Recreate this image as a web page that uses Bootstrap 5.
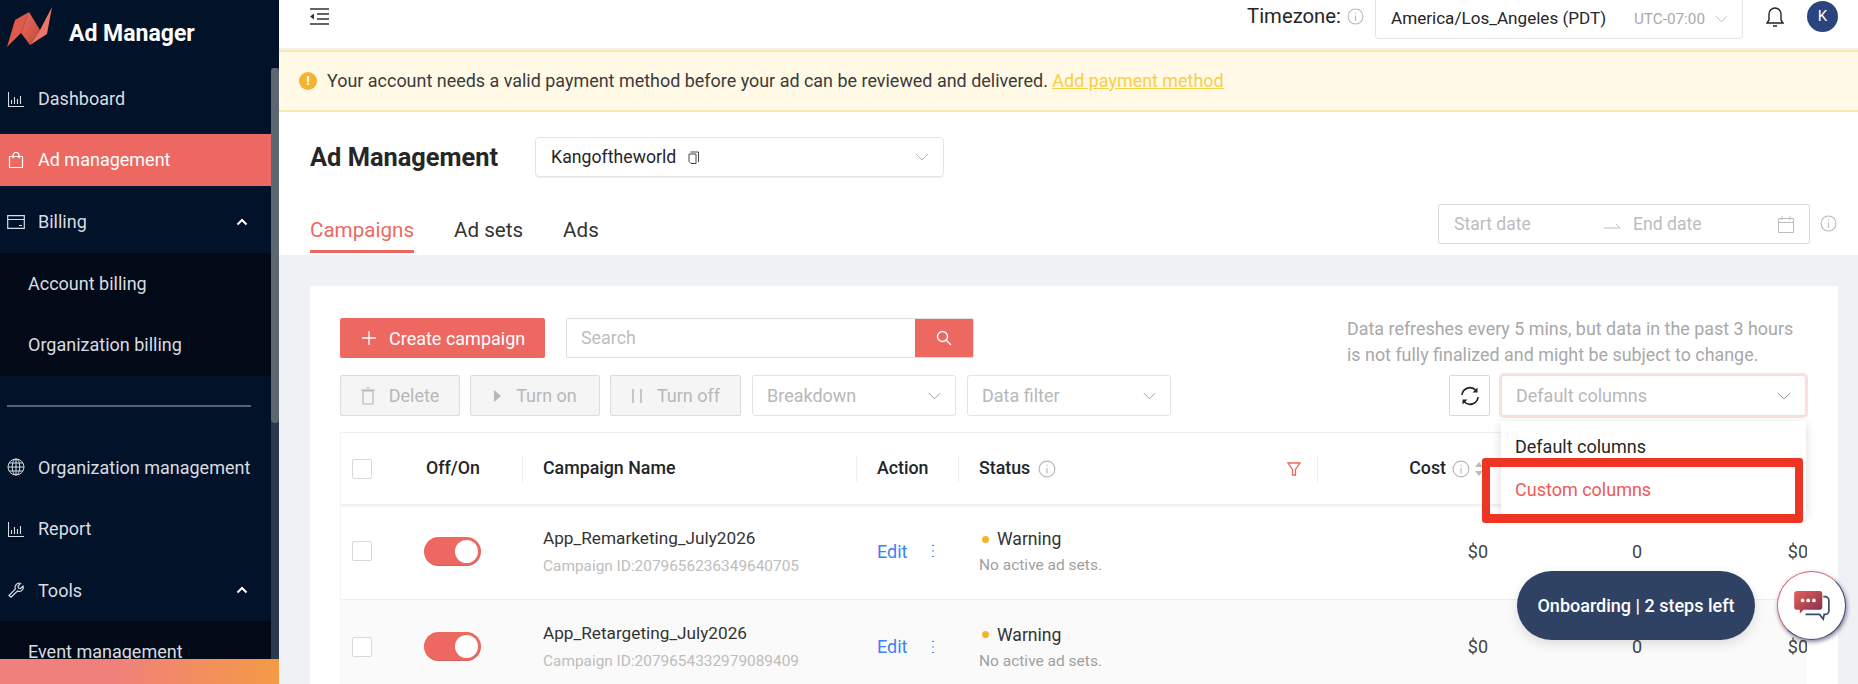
<!DOCTYPE html>
<html lang="en">
<head>
<meta charset="UTF-8">
<meta name="viewport" content="width=device-width, initial-scale=1.0">
<title>Ad Manager</title>
<link href="https://cdn.jsdelivr.net/npm/bootstrap@5.3.0/dist/css/bootstrap.min.css" rel="stylesheet">
<style>
html, body { height: 684px; overflow: hidden; }
body { font-family: Roboto, "Liberation Sans", sans-serif; color: #262626; font-size: 18px; background: #f0f1f5; }
svg { display: block; flex: none; }
.app-wrap { width: 1858px; height: 684px; position: relative; overflow: hidden; }

/* sidebar */
.side { width: 279px; height: 684px; flex: none; background: #021229; color: #d9dce1; position: relative; overflow: hidden; }
.side-logo { height: 68px; padding-left: 7px; color: #fff; font-size: 23px; font-weight: 700; gap: 17px; }
.side-logo svg { align-self: flex-start; margin-top: 7px; }
.side-link { height: 61.5px; padding: 0 23px 0 8px; gap: 14px; font-size: 18px; white-space: nowrap; margin-right: 8px; }
.side-link.on { background: #ee6862; color: #fff; height: 52px; margin: 4px 8px 5.5px 0; }
.side-link svg { width: 16px; height: 16px; }
.side-link svg.wide-ic { width: 18px; margin: 0 -1px 0 -1px; }
.side-link svg.globe-ic { width: 18px; height: 18px; margin: 0 -1px 0 -1px; }
.side-link .side-chev { width: 12px; height: 8px; margin-left: auto; }
.side-sub { background: #020a17; margin-right: 8px; }
.side-sub div { height: 61.5px; padding-left: 28px; display: flex; align-items: center; font-size: 18px; }
.side-rule { height: 2px; background: #58636f; margin: 29px 28px 30px 7px; }
.side-thumb { position: absolute; right: 0; top: 68px; bottom: 0; width: 8px; background: #2a3a4c; }
.side-thumb i { display: block; height: 355px; background: #5c6772; border-radius: 4px; }
.side-foot { position: absolute; left: 0; right: 0; bottom: 0; height: 25px; background: linear-gradient(90deg, #f0807c 40%, #f49a45 100%); }

/* top */
.main-col { flex: 1; min-width: 0; }
.top-strip { height: 48px; background: #fff; padding: 0 20px 0 31px; }
.tz-label { font-size: 20.3px; margin-right: 6px; }
.tz-box { width: 368px; height: 39px; margin: 0 23px 0 11px; padding: 0 14px 0 15px; border: 1px solid #e4e4e4; border-top: 0; border-radius: 0 0 4px 4px; font-size: 17.1px; align-self: flex-start; white-space: nowrap; }
.tz-box small { font-size: 15.3px; color: #aaa; margin-left: auto; margin-right: 10px; }
.who-badge { width: 31px; height: 31px; border-radius: 50%; background: #2a4480; color: #fff; font-size: 15px; margin-left: 23px; align-self: flex-start; margin-top: 1px; }
.pay-warn { height: 62px; margin-top: 2px; background: #fff9e6; border-top: 2px solid #fbe8ae; border-bottom: 2px solid #fbe8ae; padding-left: 20px; gap: 10px; font-size: 17.95px; color: #3b3b3b; white-space: nowrap; }
.pay-warn a { color: #f8ce47; }
.pay-dot { width: 18px; height: 18px; border-radius: 50%; background: #f5b32f; color: #fff; font-size: 13px; font-weight: 700; line-height: 18px; text-align: center; }
.head-zone { height: 143px; background: #fff; padding: 25px 21px 0 31px; }
.page-name { font-size: 25.4px; font-weight: 700; margin: 0 37px 0 0; }
.acct-box { width: 409px; height: 40px; border: 1px solid #e4e4e4; border-radius: 4px; padding: 0 14px 0 15px; font-size: 17.7px; box-shadow: 0 1px 1px #eee; }
.copy-ic { margin-left: 11px; }
.tab-row { margin-top: 23px; gap: 40px; }
.tab-row a { display: block; height: 53px; padding-top: 15px; font-size: 20.6px; color: #333; text-decoration: none; }
.tab-row a.on { color: #ee6862; border-bottom: 3px solid #ee6862; }
.date-box { width: 372px; height: 40px; border: 1px solid #d9d9d9; border-radius: 3px; padding: 0 15px; font-size: 17.6px; color: #bdbdbd; margin-top: 27px; }
.date-start { width: 150px; }
.date-arrow { margin-right: 13px; }
.date-info { margin: 38px 0 0 10px; }

/* card */
.page-body { padding: 31px 0 0 31px; height: 429px; background: #f0f1f5; }
.sheet { width: 1528px; height: 398px; background: #fff; padding: 32px 0 0 30px; }
.btn-coral { background: #ee6862; color: #fff; border: 0; border-radius: 2px; height: 40px; font-size: 18px; width: 205px; white-space: nowrap; padding-left: 17px; }
.search-box { width: 408px; height: 40px; border: 1px solid #e0e0e0; border-radius: 2px; overflow: hidden; margin-left: 21px; color: #bdbdbd; font-size: 17.9px; }
.search-box span { flex: 1; padding-left: 14px; }
.search-box b { width: 58px; height: 40px; background: #ee6862; display: flex; align-items: center; justify-content: center; }
.fresh-note { width: 452px; margin: -2px 39px 0 auto; font-size: 17.9px; line-height: 26px; color: #a8a8a8; height: 59px; }
.tool-row { height: 41px; }
.btn-off { background: #f5f5f5; border: 1px solid #dcdcdc; border-radius: 2px; color: #b8b8b8; height: 41px; font-size: 18px; padding: 0; gap: 14px; margin-right: 10px; white-space: nowrap; }
.btn-off.w-del { width: 120px; }
.btn-off.w-on { width: 130px; }
.btn-off.w-off { width: 131px; margin-right: 11px; }
.pick-box { height: 41px; border: 1px solid #e4e4e4; border-radius: 3px; padding: 0 14px 0 14px; color: #b8b8b8; font-size: 18px; background: #fff; }
.pick-box.w-pick { width: 204px; }
.pick-box.w-pick + .w-pick { margin-left: 11px; }
.spin-box { width: 41px; height: 41px; border: 1px solid #d9d9d9; border-radius: 2px; margin-left: auto; margin-right: 11px; }
.col-pick { position: relative; width: 305px; margin-right: 32px; }
.col-pick .pick-box { width: 305px; box-shadow: 0 0 0 2px #fbe0de; }
.col-menu { position: absolute; top: 46px; left: 0; width: 305px; background: #fff; box-shadow: 0 3px 10px rgba(0,0,0,.14); z-index: 3; padding: 4px 0; font-size: 18px; }
.col-menu div { height: 43px; padding-left: 14px; display: flex; align-items: center; }
.col-menu div.on { color: #ee5a55; }

/* table */
.grid-wrap { width: 1467px; margin-top: 16px; overflow: hidden; border-top: 1px solid #f0f0f0; border-left: 1px solid #f4f4f4; }
.grid { table-layout: fixed; width: 1467px; margin: 0; border-collapse: collapse; }
.grid th { height: 71px; font-size: 17.8px; font-weight: 500; vertical-align: middle; padding: 0; border-bottom: 0; position: relative; white-space: nowrap; }
.grid thead tr { box-shadow: 0 2px 3px rgba(0,0,0,.08); }
.grid th.cut::before { content: ""; position: absolute; left: 0; top: 23px; height: 26px; border-left: 1px solid #eee; }
.grid td { height: 95px; vertical-align: middle; padding: 0; border-bottom: 1px solid #eee; font-size: 18px; white-space: nowrap; color: #444; }
.grid tr.alt td { background: #fafafa; }
.grid th.onoff-head { padding-right: 16px; text-align: center; }
.cell-pad, .grid td.cell-pad { padding-left: 21px; }
.cost-info { margin-left: 6px; }
.tick-box { width: 20px; height: 20px; border: 1px solid #d9d9d9; border-radius: 2px; background: #fff; margin-left: 11px; }
.tog-pill { width: 57px; height: 29px; border-radius: 15px; background: #ee6862; margin-left: 24px; padding: 3px; box-shadow: inset 0 -1px 1px rgba(0,0,0,.1); }
.tog-pill i { display: block; width: 23px; height: 23px; border-radius: 50%; background: #fff; margin-left: auto; }
.cmp-name { font-size: 17.2px; color: #333; margin-bottom: 9px; line-height: 20px; }
.cmp-id { font-size: 15.4px; color: #bdbdbd; line-height: 18px; }
.edit-link { color: #3b82f6; text-decoration: none; }
.warn-dot { width: 7px; height: 7px; border-radius: 50%; background: #f5b32f; margin: 0 8px 0 3px; }
.warn-line { font-size: 17.6px; line-height: 22px; color: #333; }
.warn-sub { font-size: 15.5px; color: #a0a0a0; line-height: 18px; margin-top: 6px; }

/* things lying over the page */
.red-mark { position: absolute; left: 1482px; top: 458px; width: 321px; height: 65px; border: solid #ee3524; border-width: 9px 8px; border-radius: 3px; z-index: 5; }
.onboard-pill { position: absolute; left: 1517px; top: 571px; width: 238px; height: 69px; border-radius: 35px; background: #2f4263; color: #fff; font-size: 18px; font-weight: 500; z-index: 6; box-shadow: 0 4px 12px rgba(0,0,0,.12); }
.chat-ball { position: absolute; left: 1777px; top: 571px; width: 69px; height: 69px; border-radius: 50%; background: #fff; border: 1.5px solid; border-color: #d4686c #3c4a70 #3c4a70 #d4686c; box-shadow: 1px 2px 4px rgba(20,30,60,.55); z-index: 6; }
</style>
</head>
<body>
<svg width="0" height="0" class="position-absolute">
  <symbol id="ic-info" viewBox="0 0 16 16"><circle cx="8" cy="8" r="7" fill="none" stroke="currentColor"/><path d="M8 7v5M8 4.200v1.300" stroke="currentColor" fill="none"/></symbol>
  <symbol id="ic-down" viewBox="0 0 14 8"><path d="M1 1l6 6 6-6" fill="none" stroke="currentColor"/></symbol>
  <symbol id="ic-bars" viewBox="0 0 16 16"><path d="M.5 1v14.500H16M3.500 13V9M6.500 13V6M9.500 13V8M12.500 13V5" fill="none" stroke="currentColor" stroke-width="1.100"/></symbol>
</svg>
<div class="app-wrap d-flex">
  <aside class="side">
    <div class="side-logo d-flex align-items-center">
      <svg width="45" height="40" viewBox="7 7 45 40">
        <defs><linearGradient id="logoMid" x1="0" y1="0" x2="1" y2="1"><stop offset="0" stop-color="#e8705f"/><stop offset="1" stop-color="#c4463a"/></linearGradient></defs>
        <path d="M7 47l8-27 14-8-8 21z" fill="#df5a4a"/>
        <path d="M29 12l11 18-10 15-9-12z" fill="url(#logoMid)"/>
        <path d="M52 7l-5 27-17 11 10-15z" fill="#ee7565"/>
      </svg>
      <span>Ad Manager</span>
    </div>
    <div class="side-link d-flex align-items-center"><svg><use href="#ic-bars"/></svg>Dashboard</div>
    <div class="side-link on d-flex align-items-center">
      <svg viewBox="0 0 16 16"><path d="M1.500 4.500h13v11h-13zM5 6.500V3.500a3 3 0 0 1 6 0v3" fill="none" stroke="currentColor" stroke-width="1.200"/></svg>Ad management</div>
    <div class="side-link d-flex align-items-center">
      <svg class="wide-ic" viewBox="0 0 18 16"><path d="M.7 1.700h16.600v12.600H.7zM.7 5.500h16.600M12 11.500h3" fill="none" stroke="currentColor" stroke-width="1.200"/></svg><span>Billing</span>
      <svg class="side-chev" viewBox="0 0 12 8"><path d="M1.500 6.500L6 2l4.500 4.500" fill="none" stroke="#fff" stroke-width="2"/></svg></div>
    <div class="side-sub"><div>Account billing</div><div>Organization billing</div></div>
    <div class="side-rule"></div>
    <div class="side-link d-flex align-items-center">
      <svg class="globe-ic" viewBox="0 0 18 18"><g fill="none" stroke="currentColor"><circle cx="9" cy="9" r="8"/><ellipse cx="9" cy="9" rx="3.800" ry="8"/><path d="M1 9h16M2 5h14M2 13h14M9 1v16"/></g></svg><span>Organization management</span></div>
    <div class="side-link d-flex align-items-center"><svg><use href="#ic-bars"/></svg>Report</div>
    <div class="side-link d-flex align-items-center">
      <svg viewBox="0 0 16 16"><path d="M1 13.500L7.500 7a4 4 0 0 1 5-5.500L10 4l.5 2 2 .5L15 4a4 4 0 0 1-5.500 5L3 15.200z" fill="none" stroke="currentColor" stroke-width="1.200"/></svg>Tools
      <svg class="side-chev" viewBox="0 0 12 8"><path d="M1.500 6.500L6 2l4.500 4.500" fill="none" stroke="#fff" stroke-width="2"/></svg></div>
    <div class="side-sub"><div>Event management</div></div>
    <div class="side-thumb"><i></i></div>
    <div class="side-foot"></div>
  </aside>

  <div class="main-col d-flex flex-column">
    <div class="top-strip d-flex align-items-center">
      <svg width="19" height="17" viewBox="0 0 19 17" class="mb-3"><path d="M0 1h19M7 6h12M7 11h12M0 16h19" stroke="#333" stroke-width="1.300"/><path d="M4 5.500v6L0 8.500z" fill="#333"/></svg>
      <div class="ms-auto d-flex align-items-center h-100">
        <span class="tz-label mb-3">Timezone:</span>
        <svg width="17" height="17" class="text-secondary-emphasis mb-3 opacity-50"><use href="#ic-info"/></svg>
        <div class="tz-box d-flex align-items-center">
          <span>America/Los_Angeles (PDT)</span><small>UTC-07:00</small>
          <svg width="13" height="8" class="text-secondary opacity-50"><use href="#ic-down"/></svg>
        </div>
        <svg width="18" height="23" viewBox="0 0 18 23" class="mb-3"><path d="M1 18h16l-2-3V9a6 6 0 0 0-12 0v6zM7 21h4" fill="none" stroke="#222" stroke-width="1.400"/></svg>
        <div class="who-badge d-flex align-items-center justify-content-center">K</div>
      </div>
    </div>

    <div class="pay-warn d-flex align-items-center">
      <span class="pay-dot">!</span>
      <span>Your account needs a valid payment method before your ad can be reviewed and delivered. <a href="#">Add payment method</a></span>
    </div>

    <div class="head-zone">
      <div class="d-flex align-items-center">
        <h1 class="page-name">Ad Management</h1>
        <div class="acct-box d-flex align-items-center">
          <span>Kangoftheworld</span>
          <svg width="13" height="15" viewBox="0 0 13 14" class="copy-ic"><path d="M3.500 1.500h8v10M2 3.500h7v9.500H4L2 11z" fill="none" stroke="#444"/></svg>
          <svg width="14" height="8" class="ms-auto text-secondary opacity-50"><use href="#ic-down"/></svg>
        </div>
      </div>
      <div class="d-flex justify-content-between align-items-start">
        <div class="tab-row d-flex">
          <a href="#" class="on">Campaigns</a><a href="#">Ad sets</a><a href="#">Ads</a>
        </div>
        <div class="d-flex align-items-start">
          <div class="date-box d-flex align-items-center">
            <span class="date-start">Start date</span>
            <svg width="16" height="6" viewBox="0 0 16 6" class="date-arrow mt-1"><path d="M0 5h16L12 1" fill="none" stroke="#bdbdbd"/></svg>
            <span>End date</span>
            <svg width="16" height="17" viewBox="0 0 16 17" class="ms-auto"><path d="M.5 2.500h15v14H.5zM.5 6.500h15M4 0v4M12 0v4" fill="none" stroke="#bdbdbd"/></svg>
          </div>
          <svg width="17" height="17" class="date-info text-secondary opacity-50"><use href="#ic-info"/></svg>
        </div>
      </div>
    </div>

    <div class="page-body">
      <div class="sheet">
        <div class="d-flex align-items-start">
          <button class="btn btn-coral d-flex align-items-center gap-2">
            <svg width="16" height="16" viewBox="0 0 16 16" class="mx-1"><path d="M8 1v14M1 8h14" stroke="#fff" stroke-width="1.300"/></svg>Create campaign</button>
          <div class="search-box d-flex align-items-center">
            <span>Search</span>
            <b><svg width="16" height="16" viewBox="0 0 16 16"><circle cx="6.500" cy="6.500" r="5" fill="none" stroke="#fff" stroke-width="1.300"/><path d="M10 10l5 5" stroke="#fff" stroke-width="1.300"/></svg></b>
          </div>
          <div class="fresh-note">Data refreshes every 5 mins, but data in the past 3 hours is not fully finalized and might be subject to change.</div>
        </div>
        <div class="tool-row d-flex align-items-center">
          <button class="btn btn-off w-del d-flex align-items-center justify-content-center">
            <svg width="14" height="18" viewBox="0 0 14 18"><path d="M2 4h10v13H2zM0 3h14M5 1h4" fill="none" stroke="#b8b8b8" stroke-width="1.200"/></svg>Delete</button>
          <button class="btn btn-off w-on d-flex align-items-center justify-content-center">
            <svg width="9" height="14" viewBox="0 0 9 14"><path d="M1 1l7 6-7 6z" fill="#b8b8b8"/></svg>Turn on</button>
          <button class="btn btn-off w-off d-flex align-items-center justify-content-center">
            <svg width="12" height="16" viewBox="0 0 12 16"><path d="M2 1v14M10 1v14" stroke="#b8b8b8" stroke-width="1.500"/></svg>Turn off</button>
          <div class="pick-box w-pick d-flex align-items-center justify-content-between"><span>Breakdown</span><svg width="13" height="8" class="text-secondary opacity-75"><use href="#ic-down"/></svg></div>
          <div class="pick-box w-pick d-flex align-items-center justify-content-between"><span>Data filter</span><svg width="13" height="8" class="text-secondary opacity-75"><use href="#ic-down"/></svg></div>
          <div class="spin-box d-flex align-items-center justify-content-center">
            <svg width="20" height="20" viewBox="0 0 20 20"><path d="M2 9a8 8 0 0 1 14-4.500M18 11a8 8 0 0 1-14 4.500" fill="none" stroke="#222" stroke-width="1.600"/><path d="M17.500 1.500v5h-5zM2.500 18.500v-5h5z" fill="#222"/></svg>
          </div>
          <div class="col-pick">
            <div class="pick-box d-flex align-items-center justify-content-between"><span>Default columns</span><svg width="14" height="8" class="text-secondary opacity-75"><use href="#ic-down"/></svg></div>
            <div class="col-menu"><div>Default columns</div><div class="on">Custom columns</div></div>
          </div>
        </div>

        <div class="grid-wrap">
          <table class="table grid">
            <colgroup><col style="width:59px"><col style="width:122px"><col style="width:334px"><col style="width:102px"><col style="width:359px"><col style="width:171px"><col style="width:298px"><col style="width:22px"></colgroup>
            <thead>
              <tr>
                <th><div class="tick-box"></div></th>
                <th class="onoff-head">Off/On</th>
                <th class="cut"><span class="cell-pad">Campaign Name</span></th>
                <th class="cut"><span class="cell-pad">Action</span></th>
                <th class="cut">
                  <div class="d-flex align-items-center cell-pad pe-3">Status
                    <svg width="18" height="18" class="ms-2 text-secondary opacity-50"><use href="#ic-info"/></svg>
                    <svg width="14" height="14" viewBox="0 0 14 14" class="ms-auto"><path d="M1 1h12L8.500 7.500V13h-3V7.500z" fill="none" stroke="#ee6862" stroke-width="1.300"/></svg>
                  </div>
                </th>
                <th class="cut">
                  <div class="d-flex align-items-center justify-content-end pe-1">Cost
                    <svg width="18" height="18" class="cost-info text-secondary opacity-50"><use href="#ic-info"/></svg>
                    <svg width="10" height="16" viewBox="0 0 10 16" class="ms-1"><path d="M5 1l4 5H1zM5 15l4-5H1z" fill="#bbb"/></svg>
                  </div>
                </th>
                <th></th>
                <th></th>
              </tr>
            </thead>
            <tbody>
              <tr>
                <td><div class="tick-box"></div></td>
                <td><div class="tog-pill d-flex"><i></i></div></td>
                <td><div class="cmp-name cell-pad">App_Remarketing_July2026</div><div class="cmp-id cell-pad">Campaign ID:2079656236349640705</div></td>
                <td><div class="d-flex align-items-center cell-pad"><a class="edit-link" href="#">Edit</a><svg width="4" height="14" viewBox="0 0 4 14" class="ms-4"><path d="M2 1v1M2 6.500v1M2 12v1" stroke="#3b82f6" stroke-width="2"/></svg></div></td>
                <td class="cell-pad"><div class="warn-line d-flex align-items-center"><span class="warn-dot"></span>Warning</div><div class="warn-sub">No active ad sets.</div></td>
                <td class="text-end">$0</td>
                <td class="text-center">0</td>
                <td class="text-end">$0</td>
              </tr>
              <tr class="alt">
                <td><div class="tick-box"></div></td>
                <td><div class="tog-pill d-flex"><i></i></div></td>
                <td><div class="cmp-name cell-pad">App_Retargeting_July2026</div><div class="cmp-id cell-pad">Campaign ID:2079654332979089409</div></td>
                <td><div class="d-flex align-items-center cell-pad"><a class="edit-link" href="#">Edit</a><svg width="4" height="14" viewBox="0 0 4 14" class="ms-4"><path d="M2 1v1M2 6.500v1M2 12v1" stroke="#3b82f6" stroke-width="2"/></svg></div></td>
                <td class="cell-pad"><div class="warn-line d-flex align-items-center"><span class="warn-dot"></span>Warning</div><div class="warn-sub">No active ad sets.</div></td>
                <td class="text-end">$0</td>
                <td class="text-center">0</td>
                <td class="text-end">$0</td>
              </tr>
            </tbody>
          </table>
        </div>
      </div>
    </div>
  </div>

  <div class="red-mark"></div>
  <div class="onboard-pill d-flex align-items-center justify-content-center">Onboarding | 2 steps left</div>
  <div class="chat-ball d-flex align-items-center justify-content-center">
    <svg width="38" height="30" viewBox="0 0 38 32">
      <defs><linearGradient id="chatFill" x1="0" y1="0" x2="1" y2="1"><stop offset="0" stop-color="#e8605a"/><stop offset="1" stop-color="#7d2f4a"/></linearGradient></defs>
      <path d="M31 6h2a4 4 0 0 1 4 4v11a4 4 0 0 1-4 4h-1l-1 5-4-5H12" fill="none" stroke="#3c4a70" stroke-width="1.800"/>
      <path d="M3 0h24a3 3 0 0 1 3 3v14a3 3 0 0 1-3 3H10l-4 4v-4H3a3 3 0 0 1-3-3V3a3 3 0 0 1 3-3z" fill="url(#chatFill)"/>
      <circle cx="9" cy="10" r="2" fill="#fff"/><circle cx="15" cy="10" r="2" fill="#fff"/><circle cx="21" cy="10" r="2" fill="#fff"/>
    </svg>
  </div>
</div>
<script src="https://cdn.jsdelivr.net/npm/bootstrap@5.3.0/dist/js/bootstrap.bundle.min.js"></script>
</body>
</html>
